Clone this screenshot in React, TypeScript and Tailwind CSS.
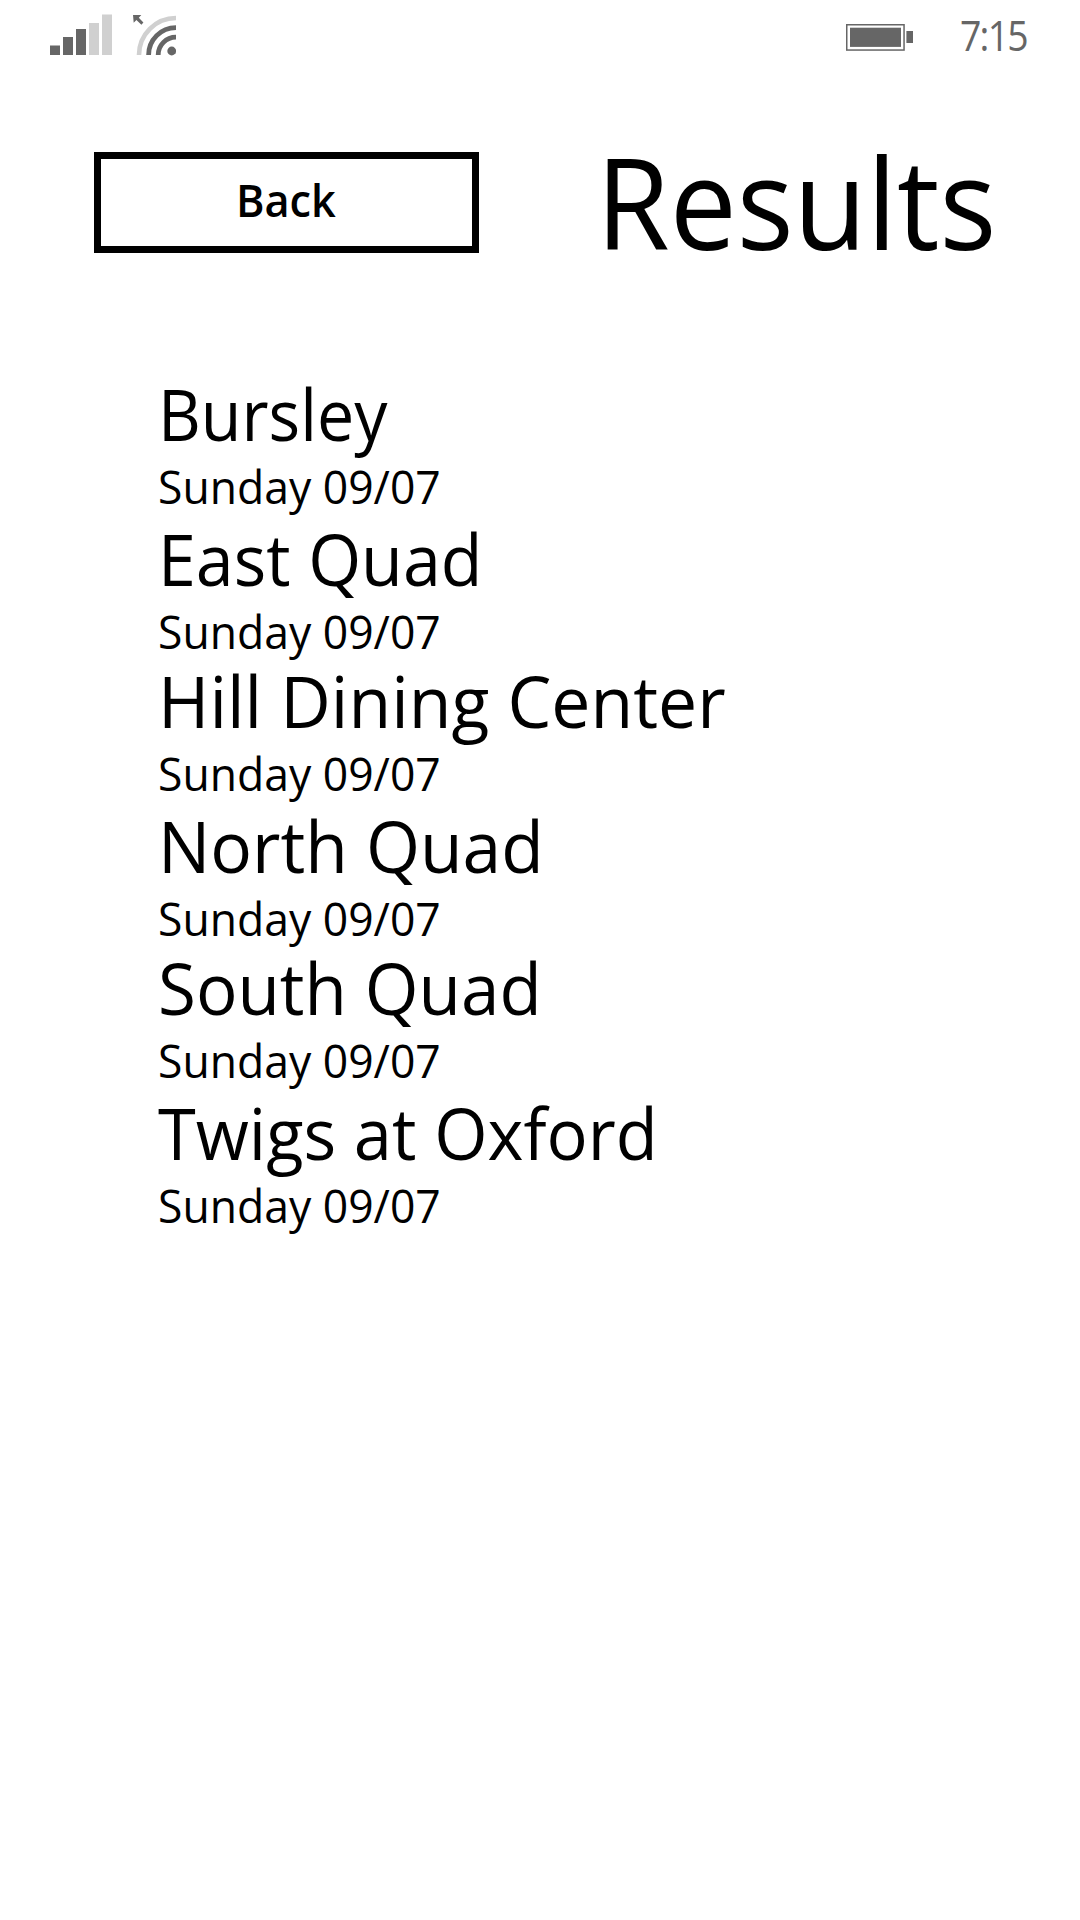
const halls = [
  { name: "Bursley", fit: "scale-x-[0.921]", row: "h-[145px]" },
  { name: "East Quad", fit: "scale-x-[0.946]", row: "h-[142px]" },
  { name: "Hill Dining Center", fit: "scale-x-[0.968]", row: "h-[145px]" },
  { name: "North Quad", fit: "scale-x-[0.965]", row: "h-[142px]" },
  { name: "South Quad", fit: "scale-x-[0.960]", row: "h-[145px]" },
  { name: "Twigs at Oxford", fit: "scale-x-[0.952]", row: "h-[142px]" },
];

function SignalIcon() {
  return (
    <svg className="h-16 w-[62px] shrink-0" viewBox="50 0 62 64" fill="#666666">
      <path d="M50 45.5h10V55H50zM63 37h10v18H63zM76 29h10v26H76z" />
      <path d="M89 23h10v32H89zM102 14.5h10V55h-10z" fill="#d0d0d0" />
    </svg>
  );
}

function WifiIcon() {
  return (
    <svg className="ml-[20px] h-16 w-[44px] shrink-0" viewBox="132 0 44 64" fill="none">
      <path d="M139 55A37 37 0 0 1 176 18" stroke="#d0d0d0" strokeWidth="4.6" />
      <path d="M148.6 55A27.4 27.4 0 0 1 176 27.6" stroke="#666666" strokeWidth="4.8" />
      <path d="M158.2 55A17.8 17.8 0 0 1 176 37.2" stroke="#666666" strokeWidth="4.8" />
      <circle cx="171.7" cy="51" r="4.4" fill="#666666" />
      <path d="M133 15h8.3l-2.5 2.7 4.6 4.7-2 2.3-5-4.7-2.7 2.7z" fill="#666666" />
    </svg>
  );
}

function BatteryIcon() {
  return (
    <svg className="h-16 w-[68px] shrink-0" viewBox="846 0 68 64" fill="#666666">
      <rect x="846.75" y="24.75" width="57.3" height="25.3" fill="none" stroke="#666666" strokeWidth="1.5" />
      <rect x="850" y="27.7" width="51" height="19.2" />
      <rect x="906.4" y="31" width="6.6" height="12" />
    </svg>
  );
}

export default function App() {
  return (
    <main className="flex h-[1920px] w-[1080px] flex-col overflow-hidden bg-white font-['Open_Sans','Noto_Sans',sans-serif] text-black">
      <div className="flex h-[72px] items-start pl-[50px]">
        <SignalIcon />
        <WifiIcon />
        <div className="ml-[670px] flex items-start">
          <BatteryIcon />
          <time className="mt-[7px] ml-[46px] block origin-left scale-x-[0.89] text-[42px] leading-[56px] tracking-[-2px] text-[#666666]">
            7:15
          </time>
        </div>
      </div>

      <header className="flex h-[300px] items-start pt-[59px] pl-[94px]">
        <button className="mt-[21px] flex h-[101px] w-[385px] shrink-0 items-start border-[7px] border-black pl-[135px]">
          <span className="block origin-left scale-x-[0.94] text-[46px] leading-[80px] font-semibold">Back</span>
        </button>
        <h1 className="mt-[2px] ml-[117px] origin-left scale-x-[0.940] text-[127px] leading-[136px] whitespace-nowrap">
          Results
        </h1>
      </header>

      <ul className="flex flex-col pl-[158px]">
        {halls.map(({ name, fit, row }) => (
          <li key={name} className={`flex flex-col items-start whitespace-nowrap ${row}`}>
            <h2 className={`mt-px origin-left text-[72px] leading-[80px] ${fit}`}>{name}</h2>
            <p className="mt-[3px] origin-left scale-x-[0.967] text-[46px] leading-[60px]">Sunday 09/07</p>
          </li>
        ))}
      </ul>
    </main>
  );
}
